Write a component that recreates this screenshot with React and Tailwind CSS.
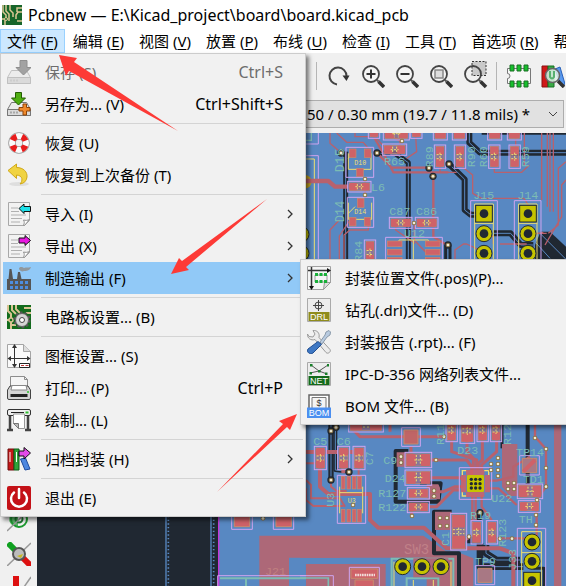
import React from "react";

/* ---------- icons ---------- */

function Icon({ children, className = "size-6" }) {
  return (
    <svg viewBox="0 0 24 24" className={className + " shrink-0"} fill="none" aria-hidden="true">
      {children}
    </svg>
  );
}

function Drive({ arrow, stroke }) {
  return (
    <>
      <path d="M4.500 10.500h15l4 7v6h-23v-6z" fill="#ececec" stroke={stroke} />
      <path d="M.5 17.500h23v6H.5z" fill="#dadada" stroke={stroke} />
      <path d="M4 19.500v2M7 19.500v2M10 19.500v2" stroke={stroke} />
      {arrow}
    </>
  );
}

const SaveIcon = () => (
  <Icon>
    <Drive
      stroke="#c0c0c0"
      arrow={<path d="M13 .5h7v7h4L16.500 15 9 7.500h4z" fill="#a2a2a2" stroke="#8e8e8e" />}
    />
  </Icon>
);

const SaveAsIcon = () => (
  <Icon>
    <Drive
      stroke="#777"
      arrow={
        <>
          <path d="M8.500.5h6v5.500h4L11.500 13 4.500 6h4z" fill="#4fae12" stroke="#235c00" />
          <path d="M16 12h3.500v3.500H23V19h-3.500v4H16v-4h-4v-3.500h4z" fill="#f08a2c" stroke="#8c4308" />
        </>
      }
    />
  </Icon>
);

const LifebuoyIcon = () => (
  <Icon>
    <circle cx="12" cy="12" r="7" stroke="#9a9a9a" strokeWidth="7.500" />
    <circle cx="12" cy="12" r="7" stroke="#fafafa" strokeWidth="6" />
    <circle cx="12" cy="12" r="7" stroke="#e81c1c" strokeWidth="6" strokeDasharray="5.500 5.500" strokeDashoffset="-2.750" />
  </Icon>
);

const UndoIcon = () => (
  <Icon>
    <ellipse cx="12" cy="21" rx="10" ry="2" fill="#dedede" />
    <path d="M1 7.500 9.500 1v3.500c7 0 11 4.500 10.500 9.500-.4 4-3 6.500-7 7 3-3 3-8.500-3.500-9v3.500z" fill="#f0d342" stroke="#d0a818" />
  </Icon>
);

function Page({ children }) {
  return (
    <>
      <path d="M1.500.5h21v18l-5 5h-16z" fill="#f2f2f2" stroke="#a8a8a8" />
      <path d="M22.500 17.500c-2 1-4 1-6 .5 1 2 1 3 0 5.500h1z" fill="#fff" stroke="#909090" />
      {children}
    </>
  );
}

const ImportIcon = () => (
  <Icon>
    <Page>
      <path d="M4 6h7M4 9.500h8M4 13h15M4 16.500h11M4 20h9" stroke="#b0b0b0" />
      <path d="M12 6.500 17 2v2.500h6.500v5H17v2z" fill="#1ce0e8" stroke="#111" />
    </Page>
  </Icon>
);

const ExportIcon = () => (
  <Icon>
    <Page>
      <path d="M4 6h7M4 9.500h7M4 13h15M4 16.500h11M4 20h9" stroke="#b0b0b0" />
      <path d="M23.500 6.500 18 1.500v2.500h-6v5h6v2.500z" fill="#e818e0" stroke="#111" />
    </Page>
  </Icon>
);

const FactoryIcon = () => (
  <Icon>
    <path d="M12 3c0-3 4-2 5-1 2-1 4 0 7-1-1 4-5 4-7 4-2 1-4 0-5-2z" fill="#90989e" />
    <path d="M2.500 3h2L6 13h4l1-7h2l1.500 7H24v11H0V13h1.500z" fill="#555" />
    <path d="M3 15h3v3H3zm5 0h3v3H8zm5 0h3v3h-3zm5 0h3v3h-3zM3 20h3v3H3zm5 0h3v3H8zm5 0h3v3h-3zm5 0h3v3h-3z" fill="#4d8de0" />
  </Icon>
);

const BoardIcon = () => (
  <Icon>
    <path d="M0 0h24v24H0z" fill="#126b1c" />
    <path d="M1 0v6l3 3v4M5 0v5l4 4M9 0v4l4 4M24 3h-7M24 8h-5M0 15h4v9M3 20h6" stroke="#d9c493" strokeWidth="2" />
    <circle cx="4" cy="15" r="2" fill="#126b1c" stroke="#d9c493" strokeWidth="1.500" />
    <circle cx="15" cy="15" r="7" stroke="#555" strokeWidth="3" strokeDasharray="2.500 1.900" />
    <circle cx="15" cy="15" r="6.500" fill="#d4d4d4" stroke="#666" />
    <circle cx="15" cy="15" r="2.500" fill="#fff" stroke="#444" />
  </Icon>
);

const FrameIcon = () => (
  <Icon>
    <path d="M.5.5h16l7 7v16H.5z" fill="#fafafa" stroke="#a5a5a5" />
    <path d="M16.500.5v7h7" fill="#ddd" stroke="#a5a5a5" />
    <path d="M7.500 2v20M2 14.500h20" stroke="#333" />
    <path d="m7.500 0 2.500 4H5zM7.500 24 5 20h5zM.5 14.500 4 12v5zM23.500 14.500 20 12v5z" fill="#333" />
    <path d="M12.500 19.500h10v4h-10z" fill="#fff" stroke="#222" />
    <path d="M14 21.500h3M18.500 21.500h3" stroke="#b33" />
  </Icon>
);

const PrintIcon = () => (
  <Icon>
    <path d="M3.500.5h14l3 3v11h-17z" fill="#f5f5f5" stroke="#8d8d8d" />
    <path d="M17.500.5v3h3" stroke="#8d8d8d" />
    <path d="M3 10h18l2.500 4v8q0 1.500-1.500 1.500H2Q.5 23.500.5 22v-8z" fill="#d4d4d4" stroke="#444" />
    <path d="M5 9.500h14l1 4.500H4z" fill="#fff" stroke="#888" />
    <path d="M3.500 19.500h17" stroke="#222" strokeWidth="3" />
    <path d="M20 16h2" stroke="#30c030" strokeWidth="1.500" />
  </Icon>
);

const PlotIcon = () => (
  <Icon>
    <path d="M3 7v14M21 7v14M0 22h6M18 22h6" stroke="#444" strokeWidth="2.500" />
    <rect x=".5" y="1.500" width="23" height="6" rx="1.500" fill="#eee" stroke="#333" />
    <path d="M4 4.500h13" stroke="#222" />
    <path d="M18.500 4.500h3" stroke="#30c030" strokeWidth="2" />
    <path d="M6.500 6h11v14.500h-6l-5-5z" fill="#fff" stroke="#999" />
    <path d="M6.500 15.500h5v5z" fill="#bbb" stroke="#777" />
  </Icon>
);

const ArchiveIcon = () => (
  <Icon>
    <path d="M1 2h6v21H1z" fill="#c41818" stroke="#6d0d0d" />
    <path d="M7 2h5v21H7z" fill="#2fa33a" stroke="#0f5c17" />
    <path d="m13.500 12 5-1 4.500 11-5 1z" fill="#4d87e0" stroke="#1e4a9c" />
    <path d="M3 5v10M9.500 5v10" stroke="#fff" />
    <path d="M23.500 6 17 .5V4h-5v5h5v3z" fill="#e24be8" stroke="#111" />
  </Icon>
);

const PowerIcon = () => (
  <Icon>
    <rect width="24" height="24" rx="2" fill="#c41218" />
    <path d="M7 6.500a8 8 0 1 0 10 0" stroke="#fff" strokeWidth="2.500" strokeLinecap="round" />
    <path d="M12 3v9" stroke="#fff" strokeWidth="2.500" strokeLinecap="round" />
  </Icon>
);

const PosIcon = () => (
  <Icon>
    <path d="M.5.5h23v16l-7 7H.5z" fill="#f5f5f5" stroke="#a0a0a0" />
    <path d="M23.500 16.500h-6l-1 7z" fill="#ddd" stroke="#999" />
    <path d="M1 4.500h19M4.500 1v20" stroke="#333" strokeWidth="1.500" />
    <path d="m24 4.500-4-2.500v5zM4.500 24 2 20h5z" fill="#111" />
    <path d="M8 9v7h12V9z" stroke="#999" />
    <path d="M8 7h3v3H8zm4.500 0h3v3h-3zm4.500 0h3v3h-3zM8 14h3v3H8zm4.500 0h3v3h-3zm4.500 0h3v3h-3z" fill="#18b038" />
  </Icon>
);

function TagText({ children }) {
  return (
    <text x="12" y="22" textAnchor="middle" fill="#fff" fontFamily="Liberation Sans, sans-serif" fontSize="9">
      {children}
    </text>
  );
}

const DrillIcon = () => (
  <Icon>
    <path d="M.5.5h23v23H.5z" fill="#ededed" stroke="#aaa" />
    <path d="M1.500 14h21v9h-21z" fill="#8f8c1c" />
    <circle cx="11.500" cy="7.500" r="3.500" stroke="#444" />
    <path d="M11.500 2v11M6 7.500h11" stroke="#444" />
    <TagText>DRL</TagText>
  </Icon>
);

const ToolsIcon = () => (
  <Icon>
    <path d="M6 .5 8 4 6 7 2 6.500.5 4C0 8 4 11 8 9.500l11 13c2 2 5.500-1 4-3L12 7.500C13 3 10 0 6 .5z" fill="#ececec" stroke="#9a9a9a" />
    <path d="m13 12 5-7 1-3 3-1.500L23.500 2 23 5l-3 2-5 7z" fill="#b9cbe0" stroke="#8a9aaa" />
    <path d="M11 11.500 14.500 14.500 6 23c-3 2-7-1-5-4z" fill="#3f78c4" stroke="#214f91" />
  </Icon>
);

const NetIcon = () => (
  <Icon>
    <path d="M.5.5h23v23H.5z" fill="#ededed" stroke="#aaa" />
    <path d="M4 3l8 6 9-6M3 11l9-2 8 3" stroke="#555" />
    <path d="M3 2h2.500v2.500H3zm17 0h2v2.500h-2zM11 8h2.500v2.500H11zM2.500 10H5v2.500H2.500zM18 10.500h2.500V13H18z" fill="#197f2b" />
    <path d="M1.500 14h21v9h-21z" fill="#146b1b" />
    <TagText>NET</TagText>
  </Icon>
);

const BomIcon = () => (
  <Icon>
    <path d="M2 1h20v14H2z" fill="#fff" stroke="#666" strokeWidth="1.500" />
    <path d="M5 3.500h14V15H5z" fill="#f4f4f4" stroke="#777" />
    <text x="12" y="11.500" textAnchor="middle" fill="#333" fontFamily="Liberation Sans, sans-serif" fontSize="9">$</text>
    <path d="M0 13.500h24V24H0z" fill="#4b8ff0" />
    <TagText>BOM</TagText>
  </Icon>
);

const RedoIcon = () => (
  <Icon>
    <path d="M10 20.500A8.500 8.500 0 1 1 19.500 12" stroke="#444" strokeWidth="2" />
    <path d="M15.500 11.500h7L19.500 17z" fill="#333" />
  </Icon>
);

function Lens({ children, fill = "#f4f4f4" }) {
  return (
    <>
      <circle cx="10" cy="10" r="8" fill={fill} stroke="#444" strokeWidth="1.800" />
      {children}
      <path d="m16 16 1.500 1.500" stroke="#555" strokeWidth="2" />
      <path d="m17.500 17.500 5.500 5.500" stroke="#333" strokeWidth="3.500" />
    </>
  );
}

const ZoomIn = () => <Icon><Lens><path d="M5.500 10h9M10 5.500v9" stroke="#333" strokeWidth="2" /></Lens></Icon>;
const ZoomOut = () => <Icon><Lens><path d="M5.500 10h9" stroke="#333" strokeWidth="2" /></Lens></Icon>;
const ZoomFit = () => <Icon><Lens><path d="M6 6h8v8H6z" fill="#ddd" stroke="#888" strokeWidth="1.500" /></Lens></Icon>;

const ZoomArea = () => (
  <Icon className="size-6 overflow-visible">
    <path d="M9-2.500h14v14H9z" fill="#c9c9c9" stroke="#333" strokeDasharray="2 1.500" />
    <Lens fill="none" />
  </Icon>
);

const FootprintIcon = () => (
  <Icon>
    <path d="M.5 4.500h23v15H.5v-5a2.500 2.500 0 0 0 0-5z" fill="#f7f7f7" stroke="#777" />
    <path d="M3 1h4v6H3zm7 0h4v6h-4zm7 0h4v6h-4zM3 17h4v6H3zm7 0h4v6h-4zm7 0h4v6h-4z" fill="#16c02c" stroke="#1b6e25" />
  </Icon>
);

const LibraryIcon = () => (
  <Icon>
    <path d="M1 2h6v21H1z" fill="#d01818" stroke="#8a1010" />
    <path d="M7 2h6v21H7z" fill="#39a845" stroke="#177022" />
    <path d="m14 5 5-2 5 17-4 2z" fill="#5a9af0" stroke="#2860b8" />
    <circle cx="11.500" cy="11.500" r="7" fill="#dff0e8" fillOpacity=".85" stroke="#666" strokeWidth="1.500" />
    <path d="M9 7v6q2 3 4 0V7" stroke="#58b070" strokeWidth="2" />
    <path d="m17 17 6 6" stroke="#333" strokeWidth="3.500" />
  </Icon>
);

const PadModeIcon = () => (
  <Icon>
    <circle cx="12" cy="11" r="8" fill="#f2f2f2" stroke="#1c9a30" strokeWidth="2" />
    <path d="M5 17a8 8 0 0 1 6-14v16z" fill="#1c9a30" opacity=".7" />
    <circle cx="12" cy="11" r="3.500" stroke="#1c7a30" strokeWidth="2" />
    <path d="M0 23 24 0" stroke="#999" strokeWidth="1.500" />
  </Icon>
);

const TrackModeIcon = () => (
  <Icon>
    <path d="m1 1 8 8" stroke="#10a020" strokeWidth="6" />
    <path d="m15 15 9 9" stroke="#dd1010" strokeWidth="6" />
    <path d="M0 24 24 1" stroke="#999" strokeWidth="1.500" />
    <circle cx="12" cy="12" r="6" fill="#bcbcbc" stroke="#555" strokeWidth="2" />
    <path d="m10 14 4 2 2-4z" fill="#c8b820" />
  </Icon>
);

const ContrastIcon = () => (
  <Icon>
    <path d="M6 0h6v24H6z" fill="#dd1010" />
    <path d="M8 24 24 1" stroke="#999" strokeWidth="1.500" />
  </Icon>
);

/* ---------- board drawing ---------- */

const COPPER = "#b8616d";
const PAD = "#cf6268";
const DARK = "#202832";
const BLUE = "#5888c2";
const SILK = "#eedf72";
const COURT = "#cfa5f0";
const LABEL = "#7cbcb4";

const Track = ({ d, w = 7, c = COPPER }) => (
  <path d={d} stroke={c} strokeWidth={w} fill="none" strokeLinejoin="round" />
);

const Gap = ({ d, w = 18, core = true }) => (
  <>
    <path d={d} stroke={DARK} strokeWidth={w} fill="none" strokeLinejoin="round" />
    {core && <path d={d} stroke={BLUE} strokeWidth="3" fill="none" />}
  </>
);

const Via = ({ x, y }) => (
  <>
    <circle cx={x} cy={y} r="7" fill="#8a7448" />
    <circle cx={x} cy={y} r="4" fill="#f0ecd8" />
  </>
);

const Label = ({ x, y, children, up = false, c = LABEL, size = 35 }) => (
  <text
    x={x}
    y={y}
    fill={c}
    fontSize={size}
    fontFamily="Liberation Mono, monospace"
    transform={up ? `rotate(-90 ${x} ${y})` : undefined}
  >
    {children}
  </text>
);

function Part({ x, y, w, h }) {
  const tall = h > w;
  const k = 0.34;
  return (
    <>
      <rect x={x} y={y} width={w} height={h} fill={BLUE} fillOpacity=".5" stroke={COURT} strokeWidth="3" />
      <rect x={x + 5} y={y + 5} width={w - 10} height={h - 10} fill={COPPER} fillOpacity=".5" stroke="#c98a6c" strokeWidth="2" />
      {tall ? (
        <>
          <rect x={x + 5} y={y + 5} width={w - 10} height={h * k} rx="4" fill={PAD} />
          <rect x={x + 5} y={y + h - 5 - h * k} width={w - 10} height={h * k} rx="4" fill={PAD} />
          <path d={`M${x + 7} ${y + h / 2 - 6}h${w - 14}M${x + 7} ${y + h / 2 + 6}h${w - 14}M${x + w / 2} ${y + h / 2 - 12}v24`} stroke={SILK} strokeWidth="3" strokeDasharray="6 4" />
        </>
      ) : (
        <>
          <rect x={x + 5} y={y + 5} width={w * k} height={h - 10} rx="4" fill={PAD} />
          <rect x={x + w - 5 - w * k} y={y + 5} width={w * k} height={h - 10} rx="4" fill={PAD} />
          <path d={`M${x + w / 2 - 6} ${y + 8}v${h - 16}M${x + w / 2 + 6} ${y + 8}v${h - 16}M${x + w / 2 - 12} ${y + h / 2}h24`} stroke={SILK} strokeWidth="3" strokeDasharray="6 4" />
        </>
      )}
    </>
  );
}

const Pad = ({ x, y, w, h }) => (
  <rect x={x} y={y} width={w} height={h} fill={PAD} stroke="#c98a6c" strokeWidth="2" />
);

const Hole = ({ x, y, square = false }) => (
  <>
    {square ? (
      <rect x={x - 25} y={y - 25} width="50" height="50" fill="#c6c400" stroke={DARK} strokeWidth="3" />
    ) : (
      <circle cx={x} cy={y} r="24" fill="#c6c400" stroke={DARK} strokeWidth="3" />
    )}
    <circle cx={x} cy={y} r="13" fill={DARK} />
  </>
);

function UpperBoard() {
  return (
    <g transform="translate(300 130) scale(.33333)">
      <Gap d="M137 65V390" w={15} />
      <Gap d="M232 70H285L325 98V390" w={15} />
      <Gap d="M508 9V38L540 68H798" />
      <Gap d="M545 10H798" w={8} core={false} />
      <Gap d="M447 102 494 148V240L512 254H550" />
      <Gap d="M580 310H632L662 345H700" />
      <Gap d="M437 390V345H450V390" w={9} core={false} />
      <path d="M705 390V345L722 305H750L798 350V390z" fill={DARK} />
      <path d="M722 312 798 388M700 330l50 55" stroke={BLUE} strokeWidth="3" />
      <path d="M55 9V42H18M18 77H55V390" stroke={COURT} strokeWidth="3" />
      <path d="M18 87H43V390" stroke={SILK} strokeWidth="3" />
      <path d="M34 9v22H18" stroke={LABEL} strokeWidth="4" />
      <circle cx="15" cy="155" r="20" fill="#c6a520" />
      <Hole x={3} y={313} />
      <Hole x={3} y={370} />
      <Track d="M18 153H85L105 170H195" w={13} />
      <Track d="M90 9V40L125 70M110 9l30 28H190L205 55M165 9V20H225L275 75H300M195 145V195M182 220V200" w={4} />
      <Track d="M232 70 275 113H385L400 138V320L440 345M215 9l40 70 25 48H445M258 9l45 25" w={7} />
      <Track d="M300 60V35M347 20 350 65 320 85M420 105V127H470M480 105 518 135V190L545 205H672L685 225" w={4} />
      <Track d="M583 115V127H665L688 105M673 9V105M647 20V50M760 9V245M750 9V245M742 9V230M725 9V210M798 95 775 115V285L745 310M798 150 785 165V260L735 345" w={4} />
      <Track d="M118 270 90 300V390M150 270 118 318V390M205 275V300H150L132 315V390M287 280V300L345 340M343 280V330L385 375M550 312 580 320V342M685 315l45-8M560 370l-60-28H490L465 360V390M690 310h50M600 342H680" w={4} />
      <Part x={205} y={-50} w={34} h={75} />
      <Part x={332} y={-50} w={34} h={75} />
      <Part x={250} y={-8} w={78} h={38} />
      <Part x={248} y={42} w={72} h={34} />
      <Part x={400} y={-50} w={42} h={80} />
      <Part x={457} y={-50} w={42} h={80} />
      <Part x={563} y={-50} w={42} h={80} />
      <Part x={622} y={-50} w={42} h={80} />
      <Part x={403} y={45} w={34} h={70} />
      <Part x={463} y={45} w={34} h={70} />
      <Part x={566} y={45} w={34} h={70} />
      <Part x={627} y={45} w={34} h={70} />
      <path d="M138 52h83v90h-83zM142 202h79v90h-79z" stroke={COURT} strokeWidth="3" />
      <path d="M145 70V118H213V70M145 85l16-16M145 218v50h70v-50M145 250l20-20" stroke={SILK} strokeWidth="3" />
      <Pad x={148} y={57} w={20} h={26} />
      <Pad x={193} y={57} w={20} h={26} />
      <Pad x={170} y={115} w={20} h={24} />
      <Pad x={172} y={206} w={20} h={26} />
      <Pad x={148} y={262} w={20} h={26} />
      <Pad x={193} y={262} w={18} h={26} />
      <Label x={163} y={105} c={SILK} size={20}>D10</Label>
      <Label x={163} y={253} c={SILK} size={20}>D14</Label>
      <Part x={143} y={154} w={70} h={32} />
      <Part x={268} y={262} w={68} h={33} />
      <Part x={346} y={262} w={68} h={33} />
      <Part x={193} y={330} w={34} h={75} />
      <path d="M257 322H427V390H257z" stroke={COURT} strokeWidth="3" />
      <path d="M297 350V330H385V350M340 330V390" stroke={SILK} strokeWidth="3" />
      {[333, 358, 382].map((y) => (
        <g key={y}>
          <Pad x={262} y={y} w={44} h={17} />
          <Pad x={376} y={y} w={44} h={17} />
        </g>
      ))}
      <path d="M512 390V212h80V390M643 390V212h80V390" stroke={COURT} strokeWidth="3" />
      <path d="M524 390V222H580V390M656 390V222H711V390" stroke={SILK} strokeWidth="3" />
      <path d="M524 280h56M656 280h56" stroke={SILK} strokeWidth="3" />
      <Hole x={552} y={251} square />
      <Hole x={552} y={311} />
      <Hole x={552} y={370} />
      <Hole x={684} y={251} square />
      <Hole x={684} y={311} />
      <Hole x={684} y={370} />
      {[[123, 69], [231, 69], [387, 114], [399, 139], [447, 102], [444, 345]].map(([x, y]) => (
        <circle key={x + "-" + y} cx={x} cy={y} r="11" fill={DARK} />
      ))}
      {[[123, 69], [231, 69], [195, 147], [195, 195], [306, 33], [387, 114], [399, 139], [447, 102], [342, 279], [444, 345]].map(([x, y]) => (
        <Via key={x + "-" + y} x={x} y={y} />
      ))}
      <Label x={133} y={127} size={40} up>D15</Label>
      <Label x={133} y={277} size={36} up>D14</Label>
      <Label x={213} y={182}>L6</Label>
      <Label x={252} y={104}>R65</Label>
      <Label x={268} y={256}>C87</Label>
      <Label x={348} y={256}>C86</Label>
      <Label x={312} y={320}>U12</Label>
      <Label x={186} y={395} up>R84</Label>
      <Label x={398} y={112} up>R89</Label>
      <Label x={525} y={112} up>R90</Label>
      <Label x={560} y={112} up>R60</Label>
      <Label x={687} y={112} up>R59</Label>
      <Label x={520} y={208}>J15</Label>
      <Label x={652} y={208}>J14</Label>
    </g>
  );
}

function LowerBoard() {
  return (
    <g transform="translate(300 420) scale(.33333)">
      <path d="M0 347H370L440 395H470L520 415V500H380V413H0z" fill="#ad6878" />
      <path d="M18 432H257V500H18z" fill="#ad6878" />
      <path d="M762 0h22V500h-22z" fill="#ad6878" />
      <Gap d="M93 10V180" w={16} />
      <Gap d="M106 10V150L150 155" w={12} />
      <Gap d="M325 93H287V245H415L422 190H360" w={12} core={false} />
      <Gap d="M683 0V210" w={12} core={false} />
      <Gap d="M606 0V85" w={9} core={false} />
      <path d="M606 72H652V192H690V228H630L606 200z" fill="#ad6878" />
      <Gap d="M455 275H402V400H477V500" w={12} core={false} />
      <Gap d="M535 275V300M540 370V440H650M500 360h40" w={20} core={false} />
      <Gap d="M558 375V400L590 420H660M575 440H670" w={20} />
      <Gap d="M700 445h32V500" w={9} core={false} />
      <path d="M290 97h50V140H290zM380 193h35l5 10v35H380zM405 275h50V330H405z" fill="#ad6878" />
      <Track d="M18 96H180M130 140V160M60 140V200L85 222H210V300L235 323H372L440 385H600L640 400V500" w={12} />
      <Track d="M18 130H55M18 180l15 15V235H120L135 260M18 205V240L40 258H130M176 140V165M93 180V200L110 213H140" w={6} />
      <Track d="M160 30 180 50H430M270 10V35M333 80V100M390 120H500L515 140V170M390 173H480L495 185" w={9} />
      <Track d="M390 215H430L465 200H490M390 260H410L460 210H480M335 265V287M501 60V95L520 115V150M455 60V95L530 120V150M547 60V120L535 130V150M590 60V95L545 135V150" w={9} />
      <Track d="M570 182H590L640 170V140L690 110M560 205H595L650 255M527 230V300M545 225V260L575 300M517 225V330M530 365V350M575 355H690M705 10V50L738 87V200L710 240V350" w={7} />
      <Track d="M510 350 480 370M460 320V380" w={9} />
      <Part x={146} y={-20} w={104} h={56} />
      <Part x={43} y={79} w={36} h={70} />
      <Part x={113} y={79} w={36} h={70} />
      <Part x={159} y={79} w={36} h={70} />
      <Part x={438} y={-5} w={34} h={70} />
      <Part x={480} y={-5} w={44} h={75} />
      <Part x={531} y={-5} w={34} h={70} />
      <Part x={571} y={-5} w={34} h={70} />
      <Part x={315} y={97} w={80} h={46} />
      <Part x={315} y={150} w={80} h={46} />
      <Part x={322} y={203} w={66} h={34} />
      <Part x={322} y={244} w={66} h={34} />
      <Part x={513} y={302} w={34} h={70} />
      <Part x={559} y={302} w={34} h={70} />
      <Part x={452} y={280} w={48} h={110} />
      <Part x={652} y={192} w={76} h={44} />
      <Part x={655} y={242} w={66} h={35} />
      <path d="M305 23h56v56h-56zM659 107h59v58h-59zM526 437h58v57h-58z" stroke={COURT} strokeWidth="3" />
      <path d="M312 30h42v42h-42z" fill="#c06566" stroke="#c98a6c" strokeWidth="3" />
      <path d="M667 115h43v43h-43z" fill="#a87884" stroke="#c98a6c" strokeWidth="3" />
      <path d="M534 445h42v42h-42z" fill="#a87884" stroke="#c98a6c" strokeWidth="3" />
      <path d="M670 155 705 120" stroke={PAD} strokeWidth="12" />
      <path d="M112 166h85V310h-85z" stroke={COURT} strokeWidth="3" />
      <path d="M119 200V280M188 200V280M119 218h68" stroke={SILK} strokeWidth="3" />
      {[124, 141, 157, 173].map((x) => (
        <g key={x}>
          <Pad x={x} y={169} w={11} h={38} />
          <Pad x={x} y={268} w={11} h={38} />
        </g>
      ))}
      <Label x={143} y={250} c={SILK} size={20}>U3</Label>
      <path d="M478 143h97v95h-97z" stroke={COURT} strokeWidth="3" />
      <path d="M487 165V152H500M552 152H566V165M487 215V228H500" stroke={SILK} strokeWidth="4" />
      <path d="M498 150h55v15h-55zM498 216h55v15h-55zM483 165h16v52h-16zM554 165h16v52h-16z" fill={PAD} opacity=".85" />
      <rect x="501" y="165" width="51" height="51" rx="4" fill="#c6c400" />
      {[514, 527, 540].map((x) =>
        [178, 191, 204].map((y) => <circle key={x + "-" + y} cx={x} cy={y} r="5" fill={DARK} />)
      )}
      <path d="M652 500V325h85V500" stroke={COURT} strokeWidth="3" />
      <path d="M665 500V335H724V500M665 398h59" stroke={SILK} strokeWidth="3" />
      <Hole x={696} y={366} />
      <Hole x={696} y={424} />
      <Hole x={696} y={482} square />
      <path d="M275 500V416H460V500M320 500V475H415V500" stroke={LABEL} strokeWidth="6" />
      <path d="M282 500V425M453 500V425M340 500V480M400 500V480" stroke={SILK} strokeWidth="3" />
      <path d="M340 415H445V472H340z" fill="#ad6878" />
      <Hole x={308} y={440} />
      <Hole x={366} y={440} />
      <Hole x={423} y={440} />
      <path d="M148 500V442h90V500" stroke={COURT} strokeWidth="3" />
      <path d="M153 447h80v28h-80zM165 480h55V500h-55z" fill={PAD} stroke="#c98a6c" strokeWidth="3" />
      <path d="M165 465H225" stroke="#f2dcd8" strokeWidth="7" strokeDasharray="5 2" />
      <path d="M0 467H100V500" stroke={COURT} strokeWidth="3" />
      <path d="M0 474H85V500" stroke={LABEL} strokeWidth="5" />
      {[[93, 33], [108, 22], [147, 156], [93, 180], [540, 278]].map(([x, y]) => (
        <circle key={x + "-" + y} cx={x} cy={y} r="11" fill={DARK} />
      ))}
      {[[93, 33], [108, 22], [147, 156], [93, 180], [159, 255], [303, 110], [303, 128], [408, 120], [402, 212], [402, 229],
        [336, 288], [432, 50], [594, 114], [573, 132], [594, 132], [573, 150], [594, 150], [594, 168], [624, 189], [642, 189],
        [624, 207], [642, 207], [738, 87], [738, 144], [738, 200], [705, 54], [711, 240], [708, 285], [708, 315], [540, 278],
        [420, 294], [441, 294], [420, 318], [441, 318], [507, 350], [600, 356], [636, 356]].map(([x, y]) => (
        <Via key={x + "-" + y} x={x} y={y} />
      ))}
      <Label x={40} y={76}>C5</Label>
      <Label x={110} y={76}>C6</Label>
      <Label x={218} y={136} up>C7</Label>
      <Label x={250} y={132}>C9</Label>
      <Label x={254} y={185}>D24</Label>
      <Label x={235} y={232}>R127</Label>
      <Label x={235} y={273}>R122</Label>
      <Label x={472} y={102}>D23</Label>
      <Label x={432} y={75} up>R11</Label>
      <Label x={632} y={75} up>R12</Label>
      <Label x={648} y={108}>TP14</Label>
      <Label x={668} y={190}>TD1</Label>
      <Label x={574} y={246}>U22</Label>
      <Label x={656} y={308}>TH</Label>
      <Label x={510} y={298}>R19</Label>
      <Label x={618} y={380} up>R123</Label>
      <Label x={446} y={378} up>C1</Label>
      <Label x={648} y={450} up>J33</Label>
      <Label x={524} y={436}>TP9</Label>
      <Label x={102} y={260} up>U3</Label>
      <Label x={312} y={402} c="#c08088" size={42}>SW3</Label>
    </g>
  );
}

function EdgeBoard() {
  return (
    <g transform="translate(150 420) scale(.33333)">
      <path d="M328 347H570V413H417V500H328zM468 432H570V500H468z" fill="#ad6878" />
      <path d="M48 200V500M183 200V500" stroke={BLUE} strokeWidth="4" />
      <path d="M55 200V500M191 200V500" stroke={BLUE} strokeWidth="5" strokeDasharray="4 7" />
      <path d="M206 200V500" stroke="#c838d8" strokeWidth="4" />
      <path d="M245 200V328H307V200M370 200V328H431V200" stroke={COURT} strokeWidth="3" />
      <path d="M253 200h46v120h-46zM378 200h46v120h-46z" fill={PAD} stroke="#c98a6c" strokeWidth="3" />
      <Via x={339} y={295} />
      <path d="M203 500V467H551V500" stroke={COURT} strokeWidth="3" />
      <path d="M210 475H535V500M288 475V500" stroke={LABEL} strokeWidth="6" />
      <Label x={345} y={465} c="#c08080">J21</Label>
    </g>
  );
}

function BoardCanvas() {
  return (
    <svg
      viewBox="37 133 529 453"
      preserveAspectRatio="xMinYMin slice"
      className="h-full min-w-0 flex-1 bg-[#202832]"
      fill="none"
      role="img"
      aria-label="PCB"
    >
      <path d="M219 133H566V586H219z" fill={BLUE} />
      <UpperBoard />
      <EdgeBoard />
      <LowerBoard />
    </svg>
  );
}

/* ---------- menus ---------- */

const MENUS = [
  ["文件", "F"], ["编辑", "E"], ["视图", "V"], ["放置", "P"], ["布线", "U"],
  ["检查", "I"], ["工具", "T"], ["首选项", "R"], ["帮助", "H"],
];

const FILE_MENU = [
  [
    { icon: SaveIcon, text: "保存 (S)", keys: "Ctrl+S", off: true },
    { icon: SaveAsIcon, text: "另存为... (V)", keys: "Ctrl+Shift+S" },
  ],
  [{ icon: LifebuoyIcon, text: "恢复 (U)" }, { icon: UndoIcon, text: "恢复到上次备份 (T)" }],
  [
    { icon: ImportIcon, text: "导入 (I)", more: true },
    { icon: ExportIcon, text: "导出 (X)", more: true },
    { icon: FactoryIcon, text: "制造输出 (F)", more: true, active: true },
  ],
  [{ icon: BoardIcon, text: "电路板设置... (B)" }],
  [
    { icon: FrameIcon, text: "图框设置... (S)" },
    { icon: PrintIcon, text: "打印... (P)", keys: "Ctrl+P" },
    { icon: PlotIcon, text: "绘制... (L)" },
  ],
  [{ icon: ArchiveIcon, text: "归档封装 (H)", more: true }],
  [{ icon: PowerIcon, text: "退出 (E)" }],
];

const FAB_MENU = [
  [
    { icon: PosIcon, text: "封装位置文件(.pos)(P)..." },
    { icon: DrillIcon, text: "钻孔(.drl)文件... (D)" },
    { icon: ToolsIcon, text: "封装报告 (.rpt)... (F)" },
    { icon: NetIcon, text: "IPC-D-356 网络列表文件..." },
    { icon: BomIcon, text: "BOM 文件... (B)" },
  ],
];

function MenuItem({ icon: Glyph, text, keys, more, off, active }) {
  return (
    <button
      type="button"
      role="menuitem"
      disabled={off}
      className={
        "flex h-8 w-full items-center whitespace-nowrap pl-1 text-left " +
        (off ? "text-[#6d6d6d] " : "text-black ") +
        (active ? "bg-[#91c9f7]" : "")
      }
    >
      <Glyph />
      <span className="ml-3.5 flex-1">{text}</span>
      {keys && <span className="pr-5 text-base">{keys}</span>}
      {more && (
        <svg viewBox="0 0 6 10" className="mr-2.5 h-2.5 w-1.5" fill="none" aria-hidden="true">
          <path d="m1 1 4 4-4 4" stroke="#333" strokeWidth="1.300" />
        </svg>
      )}
    </button>
  );
}

function Menu({ groups, label, className }) {
  return (
    <div
      role="menu"
      aria-label={label}
      className={"absolute border border-[#ccc] bg-[#f1f1f1] p-0.5 shadow-[3px_3px_4px_rgba(0,0,0,0.5)] " + className}
    >
      {groups.map((items, i) => (
        <React.Fragment key={i}>
          {i > 0 && <div role="separator" className="mt-[3px] mb-[3px] ml-[38px] h-px bg-[#d4d4d4]" />}
          {items.map((item) => <MenuItem key={item.text} {...item} />)}
        </React.Fragment>
      ))}
    </div>
  );
}

function Tool({ label, children }) {
  return (
    <button type="button" aria-label={label} className="flex size-[34px] shrink-0 items-center justify-center">
      {children}
    </button>
  );
}

const Divider = () => <div className="mr-[5px] ml-1 h-7 w-px shrink-0 bg-[#b5b5b5]" />;

export default function App() {
  return (
    <div className="relative flex h-screen flex-col overflow-hidden bg-[#f0f0f0] font-['Noto_Sans','Noto_Sans_CJK_SC',sans-serif] text-[15px] text-black">
      <header className="flex h-[29px] shrink-0 items-center gap-1.5 bg-white pl-0.5">
        <svg viewBox="0 0 20 20" className="size-5" fill="none" aria-hidden="true">
          <path d="M0 0h20v20H0z" fill="#17652a" />
          <path d="M1 0v7l3 3v3M4 0v6l3 3v7M8 0v5l3 3v4M20 3h-5v4M20 7h-4l-2 3v4M20 16h-5M0 14h3v6" stroke="#dcc795" strokeWidth="1.500" />
          <circle cx="4" cy="14" r="1.500" fill="#17652a" stroke="#dcc795" />
        </svg>
        <h1 className="whitespace-nowrap text-base">Pcbnew — E:\Kicad_project\board\board.kicad_pcb</h1>
      </header>

      <nav className="flex h-6 shrink-0 gap-px bg-white">
        {MENUS.map(([name, key], i) => (
          <button
            key={key}
            type="button"
            className={
              "shrink-0 whitespace-nowrap border px-1.5 leading-5 " +
              (i === 0 ? "border-[#99d1ff] bg-[#cce8ff]" : "border-transparent")
            }
          >
            {name} (<u className="underline-offset-2">{key}</u>)
          </button>
        ))}
      </nav>

      <div className="flex h-[45px] shrink-0 items-center pl-[312px]">
        <Divider />
        <Tool label="重做"><RedoIcon /></Tool>
        <Tool label="放大"><ZoomIn /></Tool>
        <Tool label="缩小"><ZoomOut /></Tool>
        <Tool label="缩放至合适"><ZoomFit /></Tool>
        <Tool label="缩放选择"><ZoomArea /></Tool>
        <Divider />
        <Tool label="封装编辑器"><FootprintIcon /></Tool>
        <Tool label="封装库"><LibraryIcon /></Tool>
      </div>

      <div className="relative flex h-[35px] shrink-0 items-start pt-[2px] pr-[2px] pl-10">
        <select aria-label="布线宽度" className="h-7 w-full appearance-none border border-[#adadad] bg-[#e1e1e1] pl-[266px]">
          <option>50 / 0.30 mm (19.7 / 11.8 mils) *</option>
        </select>
        <svg viewBox="0 0 10 6" className="pointer-events-none absolute top-[13px] right-2 h-1.5 w-2.5" fill="none" aria-hidden="true">
          <path d="m1 1 4 4 4-4" stroke="#444" />
        </svg>
      </div>

      <main className="flex min-h-0 flex-1">
        <aside className="w-[37px] shrink-0 overflow-hidden pt-[370px] pl-0.5">
          <Tool label="焊盘显示模式"><PadModeIcon /></Tool>
          <Tool label="布线显示模式"><TrackModeIcon /></Tool>
          <Tool label="高对比度模式"><ContrastIcon /></Tool>
        </aside>
        <BoardCanvas />
      </main>

      <Menu groups={FILE_MENU} label="文件" className="top-[53px] left-0 w-[306px]" />
      <Menu groups={FAB_MENU} label="制造输出" className="top-[259px] left-[300px] w-[310px]" />

      <svg viewBox="0 0 566 586" width="566" height="586" className="pointer-events-none absolute top-0 left-0" fill="#fd3a36" aria-hidden="true">
        <path d="M59 55 77 58 74 62 178 131 69 71 66 76z" />
        <path d="M171 274 179 258 182 261 267 199 186 267 189 270z" />
        <path d="M297 414 290 430 287 427 217 492 283 424 279 421z" />
      </svg>
    </div>
  );
}
